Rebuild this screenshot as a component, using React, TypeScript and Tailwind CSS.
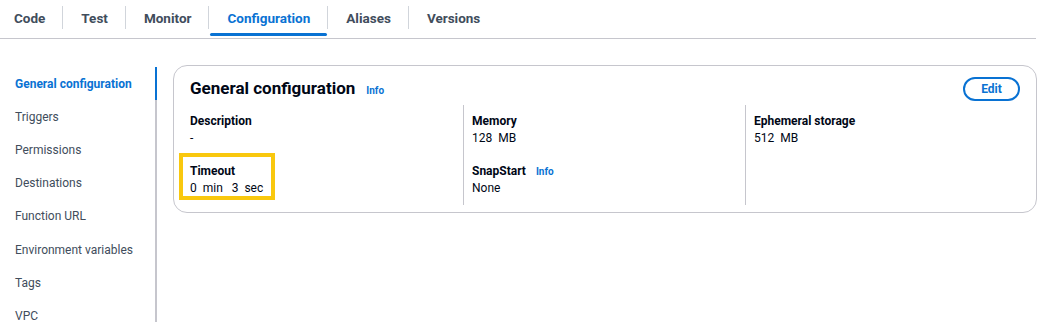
import React from "react";

const tabs = ["Code", "Test", "Monitor", "Configuration", "Aliases", "Versions"];
const navItems = [
  "General configuration",
  "Triggers",
  "Permissions",
  "Destinations",
  "Function URL",
  "Environment variables",
  "Tags",
  "VPC",
];

const Field = ({ label, value, info }: { label: string; value: React.ReactNode; info?: boolean }) => (
  <div>
    <div className="flex items-center gap-[10px] text-[12px] leading-[17px] font-bold text-[#000716]">
      {label}
      {info && <span className="text-[10px] font-bold text-[#0972d3]">Info</span>}
    </div>
    <div className="text-[12px] leading-[17px] text-[#000716]">{value}</div>
  </div>
);

export default function App() {
  return (
    <div className="w-[1046px] h-[322px] overflow-hidden bg-white font-['Roboto',sans-serif]">
      {/* tabs */}
      <div className="flex h-[39px] mr-[10px] border-b border-[#c6c6cd]">
        {tabs.map((t, i) => {
          const active = t === "Configuration";
          return (
            <div key={t} className="flex items-center">
              {i > 0 && <div className="w-px h-[23px] bg-[#d1d5db] mb-[3px]" />}
              <div
                className={`relative h-full flex items-center pb-[2px] pr-[17px] text-[13.5px] font-bold ${
                  i === 0 ? "pl-[14px]" : "pl-[18px]"
                } ${active ? "text-[#0972d3]" : "text-[#414d5c]"}`}
              >
                {t}
                {active && <div className="absolute left-[1px] right-0 bottom-[2px] h-[3px] rounded-full bg-[#0972d3]" />}
              </div>
            </div>
          );
        })}
      </div>

      <div className="flex pt-[28px]">
        {/* side nav */}
        <div className="w-[157px] shrink-0 h-[256px] flex">
          <div className="flex-1 flex flex-col">
            {navItems.map((n, i) => (
              <div
                key={n}
                className={`h-[33.2px] shrink-0 flex items-center pl-[15px] text-[12px] ${
                  i === 0 ? "font-bold text-[#0972d3]" : "text-[#414d5c]"
                }`}
              >
                {n}
              </div>
            ))}
          </div>
          <div className="w-[2px] flex flex-col bg-[#c6c6cd]">
            <div className="h-[33px] bg-[#0972d3]" />
          </div>
        </div>

        {/* card */}
        <div className="ml-[16px] mt-[-2px] w-[864px] h-[148px] rounded-[14px] border border-[#c6c6cd] px-[16px] pt-[11px]">
          <div className="flex items-center justify-between h-[24px]">
            <div className="flex items-center gap-[11px]">
              <span className="text-[17px] font-bold text-[#000716]">General configuration</span>
              <span className="text-[10px] font-bold text-[#0972d3] mt-[3px]">Info</span>
            </div>
            <button className="h-[24px] w-[57px] rounded-full border-2 border-[#0972d3] text-[12px] font-bold text-[#0972d3]">
              Edit
            </button>
          </div>

          <div className="flex mt-[4px] h-[100px]">
            <div className="w-[273px] pt-[8px] flex flex-col gap-[16px]">
              <Field label="Description" value="-" />
              <div className="relative">
                <Field
                  label="Timeout"
                  value={
                    <span className="whitespace-pre">0  min   3  sec</span>
                  }
                />
                <div className="absolute left-[-11px] top-[-10px] w-[96px] h-[47px] border-4 border-[#f9c80e]" />
              </div>
            </div>
            <div className="w-[282px] border-l border-[#c6c6cd] pl-[8px] pt-[8px] flex flex-col gap-[16px]">
              <Field label="Memory" value={<span className="whitespace-pre">128  MB</span>} />
              <Field label="SnapStart" info value="None" />
            </div>
            <div className="flex-1 border-l border-[#c6c6cd] pl-[8px] pt-[8px]">
              <Field label="Ephemeral storage" value={<span className="whitespace-pre">512  MB</span>} />
            </div>
          </div>
        </div>
      </div>
    </div>
  );
}
